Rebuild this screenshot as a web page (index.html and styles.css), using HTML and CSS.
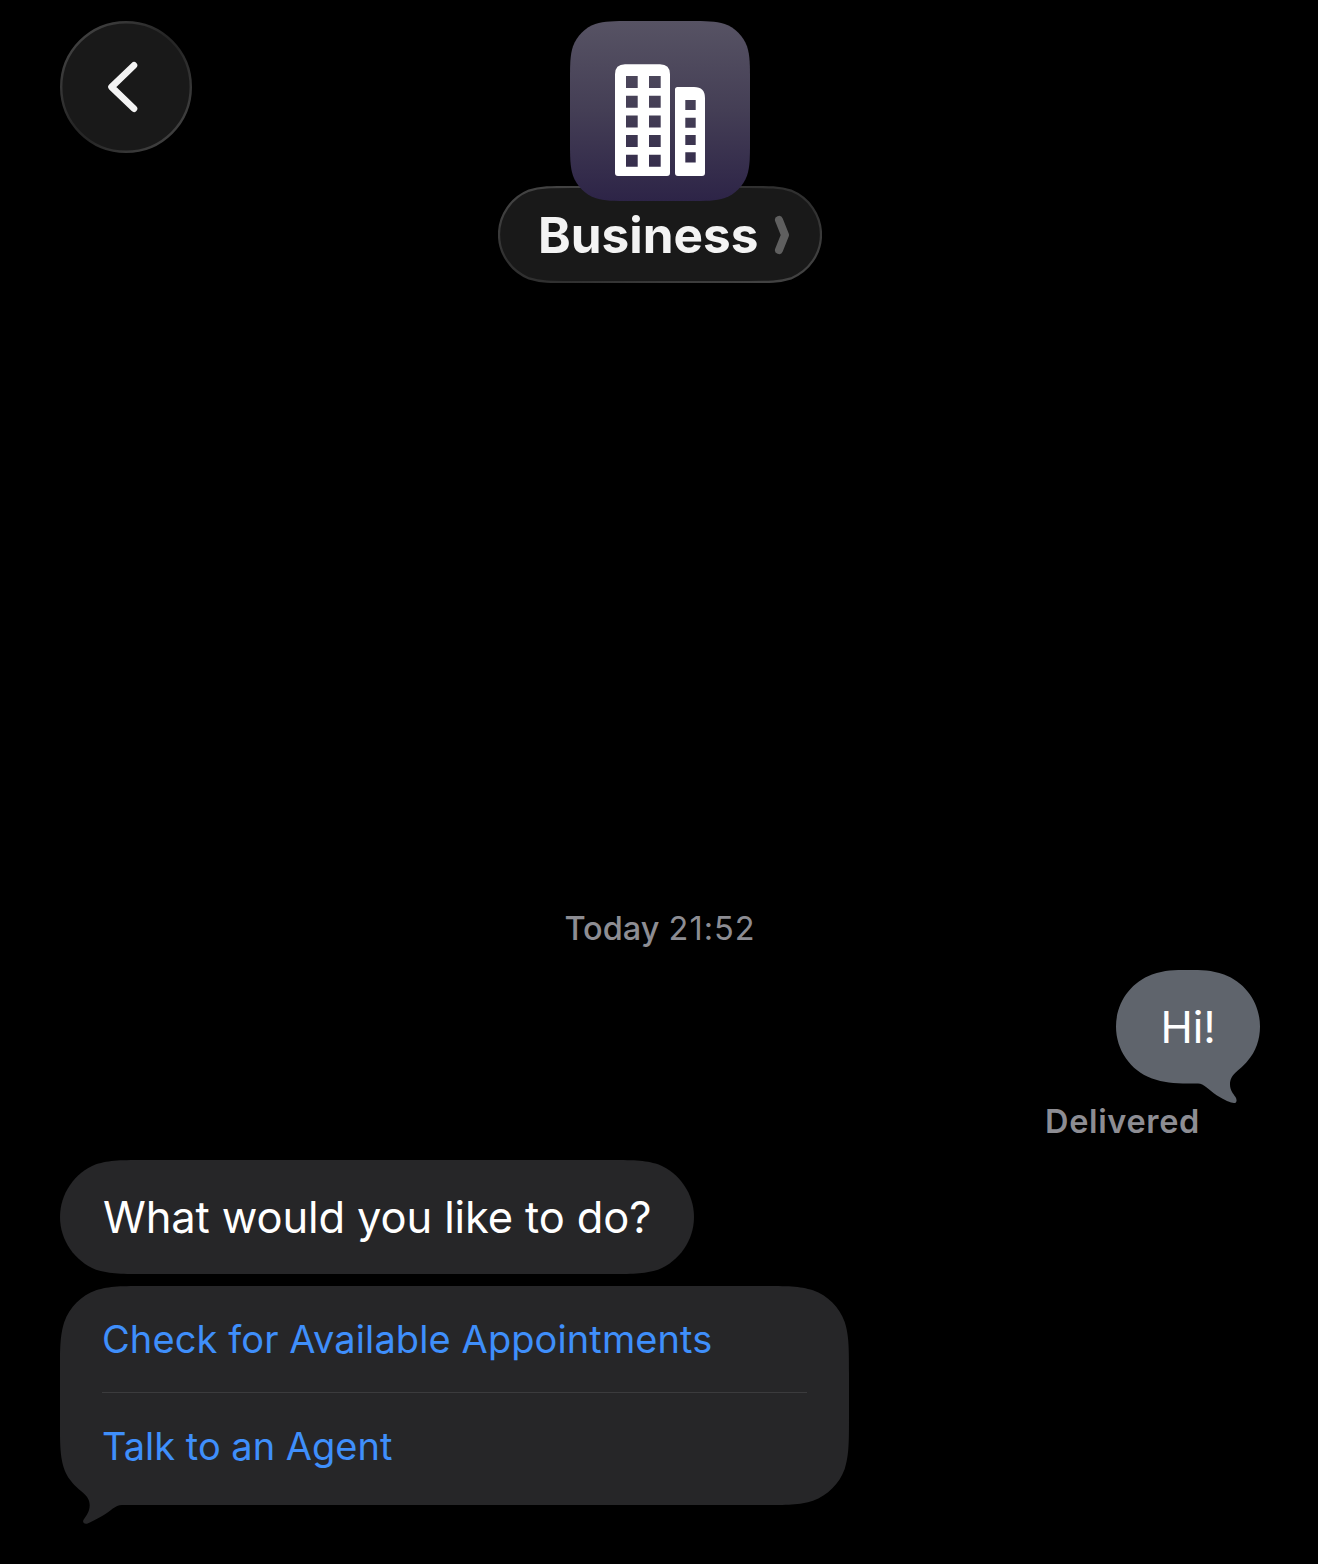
FILE: index.html
```html
<!DOCTYPE html>
<html lang="en">
<head>
<meta charset="utf-8">
<title>Business</title>
<link rel="stylesheet" href="styles.css">
</head>
<body>
<header class="header">
  <button class="back" aria-label="Back">
    <svg width="132" height="132" viewBox="0 0 132 132">
      <defs>
        <linearGradient id="rim" x1="0" y1="0" x2="1" y2="1">
          <stop offset="0.1" stop-color="#424242"/>
          <stop offset="0.45" stop-color="#262626"/>
          <stop offset="0.55" stop-color="#262626"/>
          <stop offset="0.9" stop-color="#424242"/>
        </linearGradient>
        <linearGradient id="pill-rim" x1="0" y1="0" x2="1" y2="1">
          <stop offset="0.1" stop-color="#424242"/>
          <stop offset="0.4" stop-color="#303030"/>
          <stop offset="0.6" stop-color="#303030"/>
          <stop offset="0.9" stop-color="#424242"/>
        </linearGradient>
      </defs>
      <circle cx="66" cy="66" r="64.8" fill="#191919" stroke="url(#rim)" stroke-width="2.4"/>
      <path d="M74 44.300 51.500 66 74 87.700" fill="none" stroke="#f3f3f3" stroke-width="6.6" stroke-linecap="round" stroke-linejoin="round"/>
    </svg>
  </button>
  <div class="contact">
    <svg class="avatar" width="180" height="180" viewBox="0 0 180 180">
      <defs>
        <linearGradient id="plum" x1="0" y1="0" x2="0" y2="1">
          <stop offset="0" stop-color="#575364"/>
          <stop offset="0.5" stop-color="#443e55"/>
          <stop offset="1" stop-color="#2d2447"/>
        </linearGradient>
      </defs>
      <path fill="url(#plum)" d="M61.1 0H118.9C136.5 0 145.3 0 154.7 3 165.1 6.8 173.2 14.9 177 25.3 180 34.7 180 43.5 180 61.1V118.9C180 136.5 180 145.3 177 154.7 173.2 165.1 165.1 173.2 154.7 177 145.3 180 136.5 180 118.9 180H61.1C43.5 180 34.7 180 25.3 177 14.9 173.2 6.8 165.1 3 154.7 0 145.3 0 136.5 0 118.9V61.1C0 43.5 0 34.7 3 25.3 6.8 14.9 14.9 6.8 25.3 3 34.7 0 43.5 0 61.1 0Z"/>
      <path fill="#fff" fill-rule="evenodd" d="M55 43.3H90Q100 43.3 100 53.3V152Q100 155 97 155H48Q45 155 45 152V53.3Q45 43.3 55 43.3ZM56 55V67H67.7V55ZM79 55V67H90.700V55ZM56 74.700V86.700H67.700V74.700ZM79 74.700V86.700H90.700V74.700ZM56 94.500V106.500H67.700V94.500ZM79 94.500V106.500H90.700V94.500ZM56 114.100V126H67.700V114.100ZM79 114.100V126H90.700V114.100ZM56 133.800V145.800H67.700V133.800ZM79 133.800V145.800H90.700V133.800ZM107.500 66H124Q135 66 135 77V152Q135 155 132 155H108Q105 155 105 152V68.500Q105 66 107.500 66ZM115.300 79V89H125.700V79ZM115.300 96.700V106.700H125.700V96.700ZM115.300 113.900V124H125.700V113.900ZM115.300 131.300V141.500H125.700V131.300Z"/>
    </svg>
    <div class="name-pill">
      <svg class="shape" width="324" height="97" viewBox="0 0 324 97">
        <path fill="#191919" stroke="url(#pill-rim)" stroke-width="2.2" d="M74 1H250C271 1 282 1 293 4.600 311 12 323 29 323 48.500S311 85 293 92.400C282 96 271 96 250 96H74C53 96 42 96 31 92.400 13 85 1 68 1 48.500S13 12 31 4.600C42 1 53 1 74 1Z"/>
      </svg>
      <span class="name">Business</span>
      <svg class="chevron" width="16" height="40" viewBox="0 0 16 40"><path d="M5 5 11 20 5 35" fill="none" stroke="#5f5f5f" stroke-width="8" stroke-linecap="round" stroke-linejoin="round"/></svg>
    </div>
  </div>
</header>
<main class="thread">
  <p class="stamp"><b>Today</b> <span>21:52</span></p>
  <div class="bubble sent">
    <svg class="shape" width="144" height="134" viewBox="0 -0.5 144 134">
      <path fill="#5f646c" d="M72 .5C58 .5 49 .5 36 5 14.500 13 0 33.500 0 57S14.500 101 36 109C47 113 58 114 72 114H82C88 114 92 120 101 126 108 130.500 115 133.500 118 133.500 120.500 133.500 121.500 131 119.500 127.500 117 124 114 120.500 114 115 114 104 124 101 131.500 91.500 140 82 144 70 144 57 144 33.500 129.500 13 108 5 95 .5 86 .5 72 .5Z"/>
    </svg>
    <span>Hi!</span>
  </div>
  <p class="receipt">Delivered</p>
  <div class="bubble received">
    <svg class="shape" width="634" height="114" viewBox="0 0 634 114">
      <path fill="#262628" d="M87 0H547C572 0 584.500 0 598 4.300 619.500 12.900 634 33.800 634 57S619.500 101.100 598 109.700C584.500 114 572 114 547 114H87C62 114 49.500 114 36 109.700 14.500 101.100 0 80.200 0 57S14.500 12.900 36 4.300C49.500 0 62 0 87 0Z"/>
    </svg>
    <span>What would you like to do?</span>
  </div>
  <div class="options">
    <svg class="shape" width="789" height="238" viewBox="0 0 789 238">
      <path fill="#262628" d="M87 0H702C727 0 739.500 0 753 4.300 767.700 9.600 779.400 21.300 784.700 36 789 49.500 789 62 789 87V132C789 157 789 169.500 784.700 183 779.400 197.700 767.700 209.400 753 214.700 739.500 219 727 219 702 219H62C55 219 51 225 43 229.500 37 233 31 236 27 237.700 24 238.500 22 236 23.700 233.500 26 230 29.700 226 29.700 219 29.700 208 19 206 11 195 3 185 0 173 0 147V87C0 62 0 49.500 4.300 36 9.600 21.300 21.300 9.600 36 4.300 49.500 0 62 0 87 0Z"/>
    </svg>
    <a class="option">Check for Available Appointments</a>
    <a class="option">Talk to an Agent</a>
  </div>
</main>
</body>
</html>
```
FILE: styles.css
```css
* { box-sizing: border-box; margin: 0; padding: 0; }
body {
  width: 1318px;
  min-height: 1564px;
  background: #000;
  color: #fff;
  font-family: Inter, "Liberation Sans", sans-serif;
}
svg { display: block; }
.shape { position: absolute; top: 0; left: 0; z-index: -1; }

.header {
  display: grid;
  grid-template-columns: 438px 324px 1fr;
  padding: 21px 0 0 60px;
  align-items: start;
}
.back { width: 132px; height: 132px; border: 0; background: none; }
.contact { display: flex; flex-direction: column; align-items: center; }
.avatar { position: relative; z-index: 1; }
.name-pill {
  position: relative;
  isolation: isolate;
  display: flex;
  align-items: center;
  width: 324px;
  height: 97px;
  margin-top: -15px;
  padding-left: 40px;
}
.name {
  width: 236px;
  font-size: 49.500px;
  font-weight: 660;
  letter-spacing: 0;
  line-height: 60px;
  color: #f3f3f3;
}
.name-pill .chevron { flex: none; }

.thread {
  display: flex;
  flex-direction: column;
  align-items: flex-start;
  padding: 626px 58px 0 60px;
}
.stamp {
  width: 1200px;
  height: 40px;
  line-height: 40px;
  text-align: center;
  font-size: 32.5px;
  color: #8d8d93;
}
.stamp b { font-weight: 550; }
.stamp span { letter-spacing: 1px; }
.bubble {
  position: relative;
  isolation: isolate;
  height: 114px;
  line-height: 114px;
  font-size: 43.500px;
  white-space: nowrap;
}
.sent { width: 144px; margin-top: 20px; align-self: flex-end; padding-left: 44.5px; line-height: 116px; }
.receipt {
  align-self: flex-end;
  margin-top: 19px;
  padding-right: 60px;
  height: 40px;
  line-height: 40px;
  font-size: 32.5px;
  font-weight: 570;
  letter-spacing: 0.65px;
  color: #8d8d93;
}
.received { width: 634px; margin-top: 18px; padding-left: 43px; letter-spacing: -0.13px; }
.options {
  position: relative;
  isolation: isolate;
  width: 789px;
  height: 238px;
  margin-top: 12px;
  padding: 0 42px;
}
.option {
  display: block;
  height: 107px;
  line-height: 107px;
  font-size: 38px;
  letter-spacing: 0.1px;
  color: #3f8ffb;
}
.option:last-child { letter-spacing: 0; }
.option:not(:last-child) { border-bottom: 1px solid #3b3b3d; }
```
